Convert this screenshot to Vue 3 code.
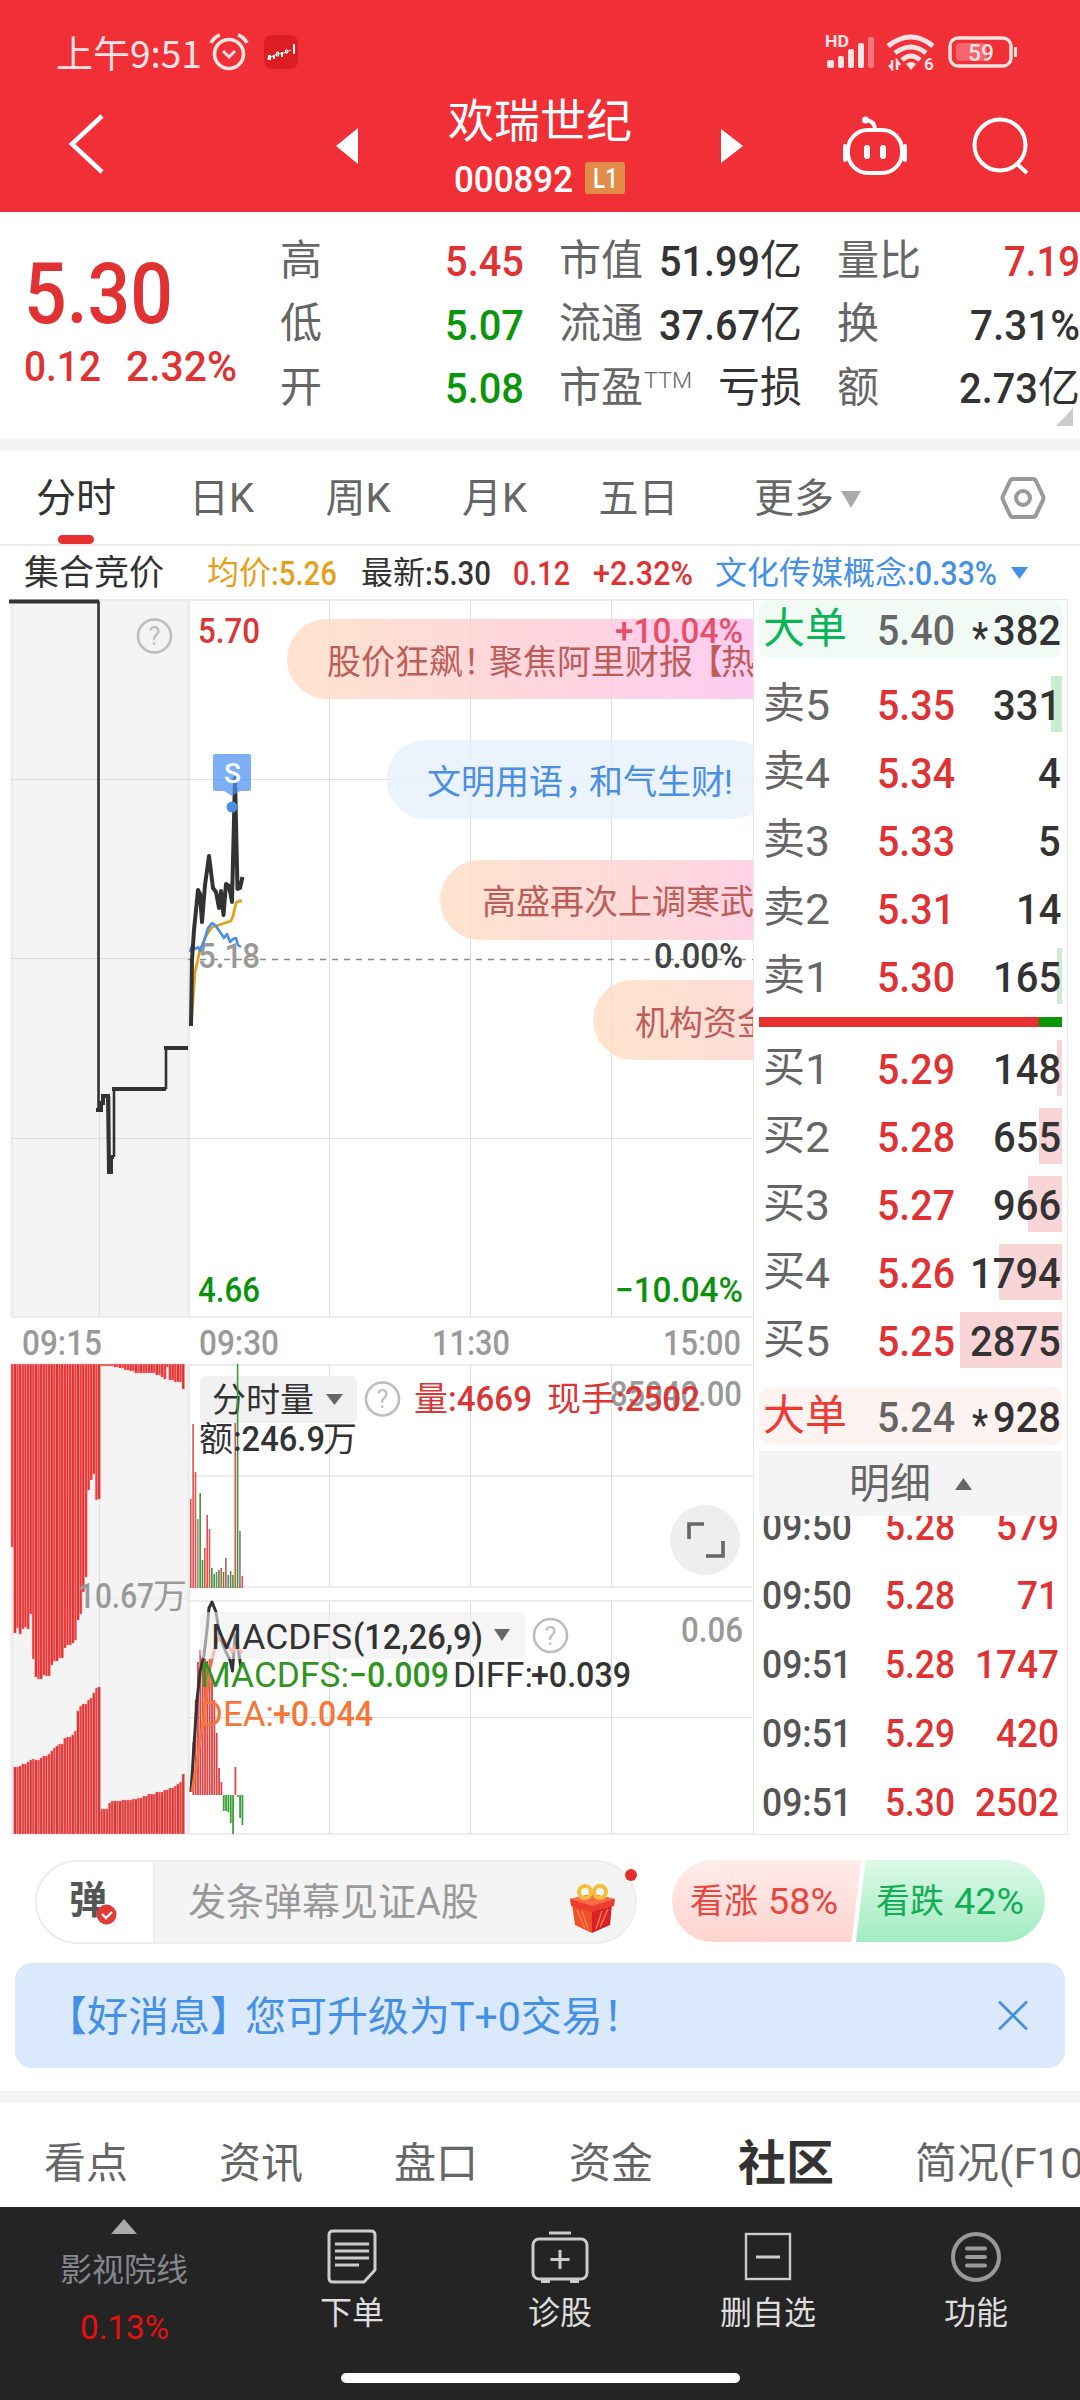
<script setup>
import { h } from 'vue'

// Texto numérico condensado: w = largura, s = altura das maiúsculas
const Fit = (props) =>
  h('svg', { class: 'fit', width: props.w, height: props.s, overflow: 'visible' }, [
    h('text', {
      x: 0,
      y: props.s,
      'font-size': props.s / 0.715,
      textLength: props.w,
      lengthAdjust: 'spacingAndGlyphs',
      fill: 'currentColor'
    }, props.t)
  ])
Fit.props = ['t', 'w', 's']

// Rótulo dentro do gráfico
const Lbl = (props) =>
  h('text', { class: 'lbl', textLength: props.w, lengthAdjust: 'spacingAndGlyphs', 'font-size': 35 }, props.t)
Lbl.props = ['t', 'w']

const quotes = [
  { a: '高', av: '5.45', ac: 'red', b: '市值', bv: '51.99', bw: 101, bu: '亿', c: '量比', cv: '7.19', cw: 76, cc: 'red' },
  { a: '低', av: '5.07', ac: 'green', b: '流通', bv: '37.67', bw: 101, bu: '亿', c: '换', cv: '7.31%', cw: 110 },
  { a: '开', av: '5.08', ac: 'green', b: '市盈', sup: 'TTM', bu: '亏损', c: '额', cv: '2.73', cw: 79, cu: '亿' }
]

const periods = ['分时', '日K', '周K', '月K', '五日']

const sells = [
  { n: '卖', i: 5, p: '5.35', q: '331', bar: 11 },
  { n: '卖', i: 4, p: '5.34', q: '4', bar: 0 },
  { n: '卖', i: 3, p: '5.33', q: '5', bar: 0 },
  { n: '卖', i: 2, p: '5.31', q: '14', bar: 0 },
  { n: '卖', i: 1, p: '5.30', q: '165', bar: 5 }
]
const buys = [
  { n: '买', i: 1, p: '5.29', q: '148', bar: 5 },
  { n: '买', i: 2, p: '5.28', q: '655', bar: 23 },
  { n: '买', i: 3, p: '5.27', q: '966', bar: 34 },
  { n: '买', i: 4, p: '5.26', q: '1794', bar: 63 },
  { n: '买', i: 5, p: '5.25', q: '2875', bar: 102 }
]

const ticks = [
  { t: '09:50', p: '5.28', q: '579' },
  { t: '09:50', p: '5.28', q: '71' },
  { t: '09:51', p: '5.28', q: '1747' },
  { t: '09:51', p: '5.29', q: '420' },
  { t: '09:51', p: '5.30', q: '2502' }
]

// Gera as barras a partir dos degraus [x inicial, y]
const steps = (list) => {
  const out = []
  for (let x = 11; x < 184.5; x += 2.63) {
    let y = list[0][1]
    for (const item of list) {
      if (x + 1 >= item[0]) y = item[1]
    }
    out.push({ x, y })
  }
  return out
}

const hanging = steps([
  [11, 1547], [13.5, 1633], [16, 1628], [19, 1634], [21, 1629], [24, 1627], [26.5, 1629], [29, 1614], [31.5, 1659],
  [34, 1677], [37, 1679], [42, 1675], [45, 1676], [50, 1665], [53, 1661], [57, 1658], [62, 1653], [64, 1648],
  [66, 1645], [70, 1643], [73, 1640], [76, 1620], [79, 1614], [81, 1592], [84, 1577], [86, 1490], [88.5, 1480],
  [91.5, 1474], [94, 1500], [96.5, 1499], [99, 1366], [113, 1367], [118, 1368], [124, 1370], [130, 1371],
  [135, 1373], [148, 1373], [155, 1375], [160, 1377], [163, 1379], [165.5, 1367], [168, 1380], [173, 1382],
  [181, 1389], [184, 1415]
])
const rising = steps([
  [11, 1834], [13.5, 1767], [18, 1766], [21, 1764], [26, 1762], [29, 1760], [32, 1759], [34, 1760], [39, 1758],
  [43, 1756], [47, 1754], [50, 1751], [53, 1748], [56, 1746], [59, 1744], [62, 1738], [67, 1737], [70, 1735],
  [73, 1731], [76, 1711], [79, 1706], [83, 1704], [86, 1700], [89, 1698], [91, 1693], [94, 1688], [97, 1687],
  [99, 1809], [107, 1803], [110, 1801], [121, 1800], [131, 1799], [137, 1798], [142, 1796], [148, 1794],
  [155, 1792], [163, 1790], [168, 1788], [173, 1786], [177, 1784], [179, 1782], [181, 1774], [184, 1765]
])

const R = '#e05050'
const G = '#3a9a35'
const K = '#7b7b7b'
const volumes = [
  [1499, R], [1424, R], [1472, R], [1519, '#b98070'], [1493, G], [1560, G], [1548, R], [1515, R], [1529, R],
  [1568, G], [1574, G], [1572, K], [1570, G], [1568, R], [1572, G], [1558, '#b86060'], [1575, K], [1571, G],
  [1575, G], [1423, R], [1364, G], [1531, K], [1576, R]
]
const macd = [
  1742, 1700, 1662, 1650, 1662, 1658, 1661, 1659, 1675, 1700, 1733, 1768, 1782,
  1811, 1811, 1812, 1823, 1834, 1767, 1797, 1818, 1825
]

const sections = ['看点', '资讯', '盘口', '资金', '社区', '简况(F10)']
</script>

<template>
  <div class="page">
    <header class="header">
      <div class="status">
        <span class="clock">上午9:51</span>
        <svg class="alarm" width="40" height="38" viewBox="0 0 40 38" fill="none" stroke="#ffe3e3" stroke-width="3.6">
          <circle cx="20" cy="21" r="14.5" />
          <path d="M2 10Q5 4 11 2M38 10Q35 4 29 2" />
          <path d="M14 18l6 6l6-6" stroke-width="3" />
        </svg>
        <svg class="app" width="34" height="34" viewBox="0 0 34 34">
          <rect width="34" height="34" rx="8" fill="#dc1d22" />
          <path d="M4 20h3v5h-3zM9 20h2v4h-2zM17 17h2v5h-2zM29 9h2v10h-2z" fill="#fff" />
          <path d="M12.500 17h2v4h-2zM21.500 15h2v3h-2z" fill="none" stroke="#fff" />
          <path d="M3 24L9 21L13 19L20 18L27 15" fill="none" stroke="#fff" />
        </svg>
        <svg class="signal" width="194" height="38" viewBox="0 0 194 38" fill="#ffe3e3">
          <text x="0" y="14" font-size="16" textLength="24" lengthAdjust="spacingAndGlyphs" font-weight="700">HD</text>
          <rect x="2" y="27" width="7" height="8" rx="2" />
          <rect x="13" y="23" width="6" height="12" rx="2" />
          <rect x="23" y="16" width="6" height="19" rx="2" />
          <rect x="33" y="10" width="6" height="25" rx="2" />
          <rect x="43" y="4" width="6" height="31" rx="2" opacity=".4" />
          <g fill="none" stroke="#ffe3e3" stroke-width="5">
            <path d="M63 13Q86 -5 108 13" />
            <path d="M70 20Q86 8 101 20" />
            <path d="M77 27Q86 19 95 27" />
          </g>
          <path d="M81 31Q86 27 91 31L86 37z" />
          <path d="M67 27v9l-3-4M72 37v-9l3 4" fill="none" stroke="#ffe3e3" stroke-width="2.500" />
          <text x="99" y="37" font-size="17" font-weight="700">6</text>
          <rect x="125" y="5" width="61" height="28" rx="8" fill="none" stroke="#ffe3e3" stroke-width="3.400" />
          <rect x="131" y="10" width="31" height="18" rx="4" opacity=".3" />
          <rect x="189" y="14" width="3" height="10" rx="1" />
          <text x="143" y="28" font-size="24" textLength="26" lengthAdjust="spacingAndGlyphs" font-weight="500">59</text>
        </svg>
      </div>
      <div class="titlebar">
        <svg class="back" width="38" height="62" viewBox="0 0 38 62" fill="none" stroke="#fff" stroke-width="4.500">
          <path d="M34 3L4 31L34 59" />
        </svg>
        <svg class="prev" width="22" height="36" viewBox="0 0 22 36"><path d="M22 0v36L0 18z" fill="#fff" /></svg>
        <div class="stock">
          <h1>欢瑞世纪</h1>
          <div class="code">
            <Fit t="000892" :w="119" :s="27" />
            <span class="level"><Fit t="L1" :w="25" :s="20" /></span>
          </div>
        </div>
        <svg class="next" width="22" height="34" viewBox="0 0 22 34"><path d="M0 0v34L22 17z" fill="#fff" /></svg>
        <svg class="robot" width="66" height="62" viewBox="0 0 66 62" fill="none" stroke="#fff" stroke-width="4">
          <path d="M33 15Q33 6 24 5" />
          <circle cx="23.500" cy="5" r="3.500" fill="#fff" stroke="none" />
          <rect x="6" y="15" width="54" height="43" rx="20" />
          <path d="M3 31v14M63 31v14" stroke-linecap="round" />
          <path d="M25 33v8M41 33v8" stroke-width="6" stroke-linecap="round" />
        </svg>
        <svg class="search" width="58" height="58" viewBox="0 0 58 58" fill="none" stroke="#fff" stroke-width="4">
          <circle cx="28" cy="28" r="25.500" />
          <path d="M45 47l10 9" />
        </svg>
      </div>
    </header>

    <section class="quote">
      <div class="price red">
        <Fit t="5.30" :w="149" :s="61" />
        <div class="change">
          <Fit t="0.12" :w="77" :s="31" />
          <Fit t="2.32%" :w="111" :s="31" />
        </div>
      </div>
      <div class="facts">
        <div v-for="q in quotes" :key="q.a" class="fact">
          <span class="col1"><i>{{ q.a }}</i><Fit :t="q.av" :w="79" :s="31" :class="q.ac" /></span>
          <span class="col2">
            <i>{{ q.b }}</i><sup v-if="q.sup"><Fit :t="q.sup" :w="48" :s="16" /></sup>
            <b><Fit v-if="q.bv" :t="q.bv" :w="q.bw" :s="31" />{{ q.bu }}</b>
          </span>
          <span class="col3"><i>{{ q.c }}</i><b :class="q.cc"><Fit :t="q.cv" :w="q.cw" :s="31" />{{ q.cu }}</b></span>
        </div>
      </div>
      <svg class="corner" width="17" height="18" viewBox="0 0 17 18"><path d="M17 0v18H0z" fill="#ccc" /></svg>
    </section>

    <nav class="periods">
      <span v-for="(p, i) in periods" :key="p" :class="{ active: i === 0 }">{{ p }}</span>
      <span class="more">更多<svg width="20" height="17" viewBox="0 0 20 17"><path d="M0 0h20L10 17z" fill="#aaa" /></svg></span>
      <svg class="gear" width="46" height="44" viewBox="0 0 46 44" fill="none" stroke="#999" stroke-width="4">
        <path d="M13 3H33Q35 3 36 5L43 20Q44 22 43 24L36 39Q35 41 33 41H13Q11 41 10 39L3 24Q2 22 3 20L10 5Q11 3 13 3z" />
        <circle cx="23" cy="22" r="7" />
      </svg>
    </nav>

    <div class="info">
      <span class="auction">集合竞价</span>
      <span class="avg">均价<Fit t=":5.26" :w="66" :s="24" /></span>
      <span class="last">最新<Fit t=":5.30" :w="66" :s="24" /></span>
      <Fit class="red diff" t="0.12" :w="57" :s="24" />
      <Fit class="red rate" t="+2.32%" :w="100" :s="24" />
      <span class="concept">文化传媒概念<Fit t=":0.33%" :w="90" :s="24" /></span>
      <svg width="17" height="12" viewBox="0 0 17 12"><path d="M0 0h17L8.500 12z" fill="#4490e6" /></svg>
    </div>

    <main class="market">
      <svg class="chart" width="753" height="1236" viewBox="0 599 753 1236">
        <defs>
          <linearGradient id="warm" gradientUnits="userSpaceOnUse" x1="287" x2="753" y1="0" y2="0">
            <stop offset="0" stop-color="#ffdfc6" />
            <stop offset=".5" stop-color="#ffd0d6" />
            <stop offset="1" stop-color="#ffc4f0" />
          </linearGradient>
          <linearGradient id="warm2" gradientUnits="userSpaceOnUse" x1="440" x2="860" y1="0" y2="0">
            <stop offset="0" stop-color="#ffdfc6" />
            <stop offset=".6" stop-color="#ffd0d9" />
            <stop offset="1" stop-color="#ffc4f0" />
          </linearGradient>
          <linearGradient id="warm3" gradientUnits="userSpaceOnUse" x1="593" x2="850" y1="0" y2="0">
            <stop offset="0" stop-color="#ffdfc6" />
            <stop offset="1" stop-color="#ffd2d5" />
          </linearGradient>
        </defs>

        <!-- fundo do leilão e grade -->
        <rect x="11" y="599" width="178" height="718" fill="#f4f4f4" />
        <rect x="11" y="1364" width="178" height="470" fill="#f4f4f4" />
        <g stroke="#ececec" stroke-width="2">
          <path d="M11 600H753M11 1317H753M189 1365H753M189 1476H753M189 1587H753M189 1601H753M189 1834H753M12 1598.500H188" />
          <path d="M12 600V1317M12 1364V1834M188.500 600V1317M188.500 1364V1834" stroke-width="3" />
        </g>
        <g stroke="#dedede" stroke-width="1">
          <path d="M11 779.500H753M11 958.500H188M11 1138.500H753M188 1717.500H753" />
          <path d="M99.500 600V1317M99.500 1364V1834" />
          <path v-for="x in [329.5, 470.5, 611.5]" :key="x" :d="`M${x} 600V1317M${x} 1364V1587M${x} 1601V1834`" />
        </g>
        <path d="M188 959.500H753" stroke="#8c8c8c" stroke-width="1.500" stroke-dasharray="6 6" />

        <!-- linha do leilão -->
        <g fill="none" stroke="#333">
          <path d="M98.500 601V1109M109 1096V1172M114 1157V1089M166 1089V1048" stroke-width="2.600" />
          <path d="M9 601.500H99M96 1110H101V1103H103V1096H108L109 1172H111V1157H114M112 1089H166M164 1048H188" stroke-width="4" />
        </g>
        <g fill="none" stroke="#bdbdbd" stroke-width="2.600">
          <circle cx="154.500" cy="636" r="16.500" />
          <circle cx="382.500" cy="1399" r="16.500" />
          <circle cx="550.500" cy="1635.500" r="16.500" />
        </g>
        <g fill="#bdbdbd" font-size="25" text-anchor="middle">
          <text x="154.500" y="645">?</text>
          <text x="382.500" y="1408">?</text>
          <text x="550.500" y="1644.500">?</text>
        </g>

        <!-- preço, média e conceito -->
        <Lbl t="5.18" x="198" y="968" :w="62" fill="#999" />
        <g fill="none" stroke-linejoin="round">
          <path d="M191 1026L195 972L200 950L206 936L212 927L222 924L231 921L233 916L236 903L239 901H242" stroke="#e3a01b" stroke-width="2.800" />
          <path d="M190 952L192 946L195 949L198 947L200 951L204 941L208 928L212 923L216 926L220 932L224 938L227 934L230 942L233 939L236 938L238 945L241 947" stroke="#4a8fe2" stroke-width="2.600" />
          <path d="M191 1026L192 960L194 930L198 890L200 894L202 922L205 885L209 856L213 888L216 892L219 908L221 891L223.500 915L226 884L229 886L232 902L235 778L237.500 889L240 888L242.500 877" stroke="#333" stroke-width="4" />
        </g>
        <path d="M215 754H249Q251 754 251 756V789Q251 791 249 791H240L232 796L224 791H215Q213 791 213 789V756Q213 754 215 754z" fill="#4a90ee" opacity=".72" />
        <circle cx="232" cy="807" r="5.500" fill="#4a8fe2" />
        <text class="lbl" x="224" y="783" font-size="28" fill="#fff">S</text>

        <Lbl t="5.70" x="198" y="643" :w="62" fill="#d93636" />
        <Lbl t="4.66" x="198" y="1302" :w="62" fill="#0a920a" />
        <Lbl t="0.00%" x="654" y="968" :w="89" fill="#444" />
        <Lbl t="−10.04%" x="615" y="1302" :w="128" fill="#0a920a" />
        <g fill="#999">
          <Lbl t="09:15" x="22" y="1355" :w="80" />
          <Lbl t="09:30" x="199" y="1355" :w="80" />
          <Lbl t="11:30" x="432" y="1355" :w="78" />
          <Lbl t="15:00" x="663" y="1355" :w="78" />
        </g>

        <!-- comentários flutuantes -->
        <g opacity=".85">
          <path d="M753 619H327A40 40 0 0 0 327 699H753z" fill="url(#warm)" />
          <path d="M726 740H426A39.500 39.500 0 0 0 426 819H726Q742 819 753 814V745Q742 740 726 740z" fill="#e8f1fd" />
          <path d="M753 860H480A40 40 0 0 0 480 940H753z" fill="url(#warm2)" />
          <path d="M753 980H633A40 40 0 0 0 633 1060H753z" fill="url(#warm3)" />
        </g>
        <Lbl t="+10.04%" x="615" y="643" :w="128" fill="#e8506a" />
        <g font-size="34" fill="#bd5d59">
          <text x="327" y="674">股价狂飙</text>
          <text x="463" y="674">！</text>
          <text x="489" y="674">聚焦阿里财报</text>
          <text x="689" y="674">【</text>
          <text x="721" y="674">热</text>
          <text x="482" y="914">高盛再次上调寒武</text>
          <text x="635" y="1035">机构资金</text>
          <g fill="#4a8fe2">
            <text x="427" y="794">文明用语</text>
            <text x="565" y="794">，</text>
            <text x="589" y="794">和气生财</text>
            <text x="724" y="794">!</text>
          </g>
        </g>

        <!-- volume do leilão -->
        <g stroke="#f7a5a5" stroke-width=".4">
          <rect v-for="(b, i) in hanging" :key="'h' + i" :x="b.x" y="1364" width="2.63" :height="b.y - 1364" :fill="i % 2 ? '#dc3434' : '#ee3a3a'" />
          <rect v-for="(b, i) in rising" :key="'r' + i" :x="b.x" :y="b.y" width="2.63" :height="1834 - b.y" :fill="i % 2 ? '#cf3a3a' : '#ec4040'" />
        </g>
        <Lbl t="10.67" x="78" y="1608" :w="76" fill="#999" />
        <text x="153" y="1608" font-size="34" fill="#999">万</text>

        <!-- volume por minuto -->
        <Lbl t="85940.00" x="610" y="1406" :w="132" fill="#999" />
        <rect x="200" y="1376" width="157" height="47" rx="6" fill="#f1f1f1" />
        <text x="212" y="1412" font-size="34" fill="#333">分时量</text>
        <path d="M326 1394H343L334.500 1405z" fill="#666" />
        <rect v-for="(v, i) in volumes" :key="'v' + i" :x="190 + i * 2.34" :y="v[0]" width="1.6" :height="1588 - v[0]" :fill="v[1]" />
        <g fill="#d93636">
          <text x="414" y="1411" font-size="34">量</text>
          <Lbl t=":4669" x="448" y="1411" :w="84" />
          <text x="547" y="1411" font-size="34">现手</text>
          <Lbl t=":2502" x="616" y="1411" :w="84" />
        </g>
        <g fill="#333">
          <text x="199" y="1451" font-size="34">额</text>
          <Lbl t=":246.9" x="233" y="1451" :w="92" />
          <text x="323" y="1451" font-size="34">万</text>
        </g>
        <circle cx="705" cy="1540" r="35" fill="#eee" />
        <path d="M704 1524H689V1539M723 1541V1556H706" fill="none" stroke="#666" stroke-width="3.600" />

        <!-- MACD -->
        <rect
          v-for="(m, i) in macd"
          :key="'m' + i"
          :x="192.4 + i * 2.34"
          :y="Math.min(m, 1795)"
          width="1.8"
          :height="Math.abs(m - 1795)"
          :fill="m < 1795 ? '#dc4545' : '#3aa035'"
        />
        <g fill="none" stroke-linejoin="round" stroke-width="3">
          <path d="M191 1792L194 1745L197 1700L200 1672L204 1655L207 1630L209 1608L212 1602L216 1612L220 1638L226 1652L230 1660L232.500 1671L235 1635L237 1640L241 1668" stroke="#333" />
          <path d="M192 1792L198 1755L204 1715L210 1668L216 1643L220 1636L226 1642L232 1652L237 1646L242 1653" stroke="#fa7040" />
        </g>
        <rect x="200" y="1612" width="325" height="47" rx="6" fill="#efefef" opacity=".6" />
        <Lbl class="thin" t="MACDFS" x="211" y="1649" :w="141" fill="#333" />
        <Lbl t="(12,26,9)" x="353" y="1649" :w="130" fill="#333" />
        <path d="M494 1629H510L502 1641z" fill="#666" />
        <Lbl t="0.06" x="681" y="1642" :w="62" fill="#999" />
        <g fill="#2f951f">
          <Lbl class="thin" t="MACDFS:" x="200" y="1687" :w="149" />
          <Lbl t="−0.009" x="349" y="1687" :w="100" />
        </g>
        <g fill="#333">
          <Lbl class="thin" t="DIFF:" x="453" y="1687" :w="80" />
          <Lbl t="+0.039" x="531" y="1687" :w="100" />
        </g>
        <g fill="#f67639">
          <Lbl class="thin" t="DEA:" x="200" y="1726" :w="74" />
          <Lbl t="+0.044" x="273" y="1726" :w="100" />
        </g>
      </svg>

      <aside class="book">
        <div class="big big-sell">
          <span>大单</span><Fit t="5.40" :w="78" :s="31" />
          <b><Fit class="star" t="*" :w="16" :s="31" /><Fit t="382" :w="68" :s="31" /></b>
        </div>
        <div class="levels sell">
          <div v-for="r in sells" :key="r.i" class="level-row">
            <em :style="{ width: r.bar + 'px' }"></em>
            <span>{{ r.n }}<Fit :t="r.i" :w="25" :s="31" /></span>
            <Fit class="red" :t="r.p" :w="78" :s="31" />
            <b><Fit :t="r.q" :w="r.q.length * 22.7" :s="31" /></b>
          </div>
        </div>
        <div class="ratio"><i></i></div>
        <div class="levels buy">
          <div v-for="r in buys" :key="r.i" class="level-row">
            <em :style="{ width: r.bar + 'px' }"></em>
            <span>{{ r.n }}<Fit :t="r.i" :w="25" :s="31" /></span>
            <Fit class="red" :t="r.p" :w="78" :s="31" />
            <b><Fit :t="r.q" :w="r.q.length * 22.7" :s="31" /></b>
          </div>
        </div>
        <div class="big big-buy">
          <span>大单</span><Fit t="5.24" :w="78" :s="31" />
          <b><Fit class="star" t="*" :w="16" :s="31" /><Fit t="928" :w="68" :s="31" /></b>
        </div>
        <div class="detail">
          明细<svg width="17" height="12" viewBox="0 0 17 12"><path d="M8.500 0L17 12H0z" fill="#666" /></svg>
        </div>
        <div class="ticks">
          <div v-for="(t, i) in ticks" :key="i" class="tick">
            <Fit :t="t.t" :w="90" :s="28" />
            <Fit class="red" :t="t.p" :w="70" :s="28" />
            <b class="red"><Fit :t="t.q" :w="t.q.length * 21" :s="28" /></b>
          </div>
        </div>
      </aside>
    </main>

    <div class="danmaku">
      <div class="compose">
        <div class="toggle">
          弹
          <svg width="21" height="21" viewBox="0 0 21 21">
            <circle cx="10.500" cy="10.500" r="10" fill="#e23b36" />
            <path d="M6 10l4 4l6-6" fill="none" stroke="#fff" stroke-width="2.400" />
          </svg>
        </div>
        <div class="placeholder">发条弹幕见证A股</div>
        <svg class="gift" width="48" height="50" viewBox="0 0 48 50">
          <path d="M3 20L23 26L23 49L6 41z" fill="#f0502c" />
          <path d="M23 26L43 20L41 41L23 49z" fill="#d81f25" />
          <path d="M1 15L23 10L46 15L45 22L23 28L2 22z" fill="#ea3d2e" />
          <path d="M1 15L23 10L46 15L23 22z" fill="#fb6a45" />
          <path d="M8 26l8 18M13 27l6 18M33 27l-6 18M39 25l-8 18" stroke="#ff7a48" stroke-width="1.500" />
          <g fill="none" stroke="#f5bf3d" stroke-width="4">
            <ellipse cx="16" cy="8" rx="6" ry="6" />
            <ellipse cx="31" cy="8" rx="6" ry="6" />
          </g>
        </svg>
        <i class="dot"></i>
      </div>
      <div class="vote">
        <div class="bull">看涨<Fit t="58%" :w="70" :s="26" /></div>
        <div class="bear">看跌<Fit t="42%" :w="70" :s="26" /></div>
      </div>
    </div>

    <div class="banner">
      <span class="msg">【好消息<i class="rb">】</i>您可升级为T+0交易！</span>
      <svg width="30" height="29" viewBox="0 0 30 29" stroke="#4a90e2" stroke-width="2.800"><path d="M1 0.500L29 28.500M29 0.500L1 28.500" /></svg>
    </div>

    <nav class="sections">
      <span v-for="s in sections" :key="s" :class="{ on: s === '社区' }">{{ s }}</span>
    </nav>

    <footer class="footer">
      <div class="index">
        <svg width="26" height="15" viewBox="0 0 26 15"><path d="M13 0L26 15H0z" fill="#aaa" /></svg>
        <span>影视院线</span>
        <Fit t="0.13%" :w="89" :s="24" />
      </div>
      <div class="action">
        <svg width="56" height="56" viewBox="0 0 56 56" fill="none" stroke="#ccc" stroke-width="3">
          <path d="M9 2H47Q51 2 51 6V41L40 53H9Q5 53 5 49V6Q5 2 9 2z" />
          <path d="M11 15H45M11 22H45M11 29H45M11 36H35" />
        </svg>
        <span>下单</span>
      </div>
      <div class="action">
        <svg width="60" height="56" viewBox="0 0 60 56" fill="none" stroke="#ccc" stroke-width="3">
          <path d="M19 4H41" />
          <rect x="3" y="10" width="54" height="40" rx="6" />
          <path d="M30 21V40M20.500 30.500H39.500" />
          <path d="M11 52H20M40 52H49" stroke-width="4" />
        </svg>
        <span>诊股</span>
      </div>
      <div class="action">
        <svg width="56" height="56" viewBox="0 0 56 56" fill="none" stroke="#ccc" stroke-width="2.400">
          <rect x="6" y="5" width="44" height="45" />
          <path d="M16 28H40" stroke-width="3" />
        </svg>
        <span>删自选</span>
      </div>
      <div class="action">
        <svg width="56" height="56" viewBox="0 0 56 56" fill="none" stroke="#999" stroke-width="4">
          <circle cx="28" cy="28" r="23" />
          <path d="M19 19.500H37M19 28H37M19 36.500H37" stroke-linecap="round" />
        </svg>
        <span>功能</span>
      </div>
    </footer>
    <div class="home"><i></i></div>
  </div>
</template>

<style>
body {
  background: #fff;
  overflow: hidden;
}

.fit text,
.lbl {
  font-family: Roboto, sans-serif;
}
</style>

<style scoped>
.page {
  width: 1080px;
  height: 2400px;
  overflow: hidden;
  background: #fff;
  color: #333;
  font-family: Roboto, "Noto Sans CJK SC", sans-serif;
  line-height: 1;
}

svg {
  display: block;
  flex: none;
}

.fit,
.lbl {
  font-weight: 500;
}

.lbl.thin {
  font-weight: 400;
}

.fit {
  overflow: visible;
}

i,
em {
  font-style: normal;
}

b {
  font-weight: 400;
}

.red {
  color: #e03232;
}

.green {
  color: #0a960a;
}

/* Cabeçalho */
.header {
  height: 212px;
  background: #f12f37;
  color: #fff;
}

.status {
  display: flex;
  align-items: center;
  height: 38px;
  padding: 33px 61px 0 56px;
}

.clock {
  width: 153px;
  font-family: "Noto Sans CJK SC", sans-serif;
  font-size: 37px;
  color: #ffe3e3;
  white-space: nowrap;
}

.app {
  margin-left: 15px;
}

.signal {
  margin-left: auto;
}

.titlebar {
  display: flex;
  align-items: center;
  height: 120px;
  padding: 15px 50px 0 68px;
}

.back {
  margin-top: -4px;
}

.prev {
  margin-left: 230px;
}

.stock {
  width: 182px;
  margin-left: 90px;
}

.stock h1 {
  margin: 0;
  font-size: 46px;
  font-weight: 400;
  white-space: nowrap;
}

.code {
  display: flex;
  align-items: center;
  height: 32px;
  margin-top: 18px;
  padding-left: 6px;
}

.level {
  display: flex;
  align-items: center;
  justify-content: center;
  width: 40px;
  height: 32px;
  margin-left: 12px;
  border-radius: 3px;
  background: #e18c48;
}

.next {
  margin-left: 91px;
}

.robot {
  margin-left: 99px;
}

.search {
  margin-left: auto;
}

/* Cotação */
.quote {
  position: relative;
  display: flex;
  height: 227px;
  border-bottom: 12px solid #f4f4f4;
}

.price {
  width: 256px;
  padding: 50px 0 0 24px;
  box-sizing: content-box;
}

.change {
  display: flex;
  gap: 25px;
  margin-top: 27px;
}

.facts {
  flex: 1;
  padding-top: 17px;
  font-size: 42px;
}

.fact {
  display: flex;
  height: 63.5px;
}

.fact > span {
  display: flex;
  align-items: center;
}

.fact i,
sup {
  color: #666;
}

sup {
  align-self: flex-start;
  margin: 16px 0 0 1px;
}

sup .fit {
  font-weight: 300;
}

.fact b {
  display: flex;
  align-items: center;
  margin-left: auto;
}

.col1 {
  width: 244px;
}

.col1 .fit {
  margin-left: auto;
}

.col2 {
  width: 243px;
  margin-left: 35px;
}

.col3 {
  width: 243px;
  margin-left: 35px;
}

.corner {
  position: absolute;
  right: 7px;
  bottom: 13px;
}

/* Períodos */
.periods {
  display: flex;
  align-items: center;
  height: 93px;
  padding-left: 36px;
  border-bottom: 2px solid #ececec;
  font-size: 40px;
  color: #666;
}

.periods span {
  position: relative;
  width: 136.5px;
  padding-top: 3px;
}

.periods span:first-child {
  width: 153px;
}

.periods .active {
  color: #333;
}

.periods .active::after {
  content: "";
  position: absolute;
  left: 22px;
  bottom: -25px;
  width: 36px;
  height: 9px;
  border-radius: 5px;
  background: #e93030;
}

.periods .more {
  display: flex;
  align-items: center;
  gap: 7px;
  margin-left: 19px;
}

.gear {
  margin-left: auto;
  margin-right: 34px;
}

/* Resumo */
.info {
  display: flex;
  align-items: center;
  height: 53px;
  padding: 1px 52px 0 24px;
  box-sizing: border-box;
  font-size: 32px;
}

.info span {
  display: flex;
  align-items: center;
}

.auction {
  width: 183px;
  font-size: 35px;
}

.avg {
  width: 154px;
  color: #e3a01b;
}

.last {
  width: 151px;
}

.diff {
  margin-left: 1px;
  margin-right: 23px;
}

.concept {
  margin-left: 22px;
  margin-right: auto;
  color: #4490e6;
}

/* Gráfico e livro de ofertas */
.market {
  display: flex;
  height: 1236px;
}

.book {
  display: flex;
  flex-direction: column;
  box-sizing: border-box;
  width: 315px;
  height: 1236px;
  padding: 0 5px;
  border: 1px solid #e8e8e8;
  font-size: 42px;
}

.big {
  display: flex;
  align-items: center;
  height: 58px;
  padding: 0 1px 0 4px;
  border-radius: 10px;
}

.big span {
  width: 114px;
}

.big .fit {
  color: #666;
}

.big b,
.level-row b,
.tick b {
  display: flex;
  margin-left: auto;
}

.big b .fit {
  color: #333;
}

.big .star {
  margin: 7px 5px -7px 0;
}

.big-sell {
  background: #f2faf6;
  color: #0bb457;
}

.big-buy {
  margin-top: 18px;
  background: #fff3f2;
  color: #ee3a32;
}

.levels {
  box-sizing: border-box;
}

.sell {
  height: 359px;
  padding-top: 12px;
}

.buy {
  height: 342px;
  padding-top: 7px;
}

.level-row {
  position: relative;
  display: flex;
  align-items: center;
  height: 68px;
  padding: 0 1px 0 4px;
}

.level-row em {
  position: absolute;
  right: 0;
  top: 6px;
  height: 56px;
  background: #fad5d7;
}

.sell .level-row em {
  background: #cdebcf;
}

.level-row .fit,
.level-row span {
  position: relative;
}

.level-row span {
  display: flex;
  align-items: center;
  width: 114px;
  color: #666;
}

.level-row span .fit {
  font-weight: 400;
}

.ratio {
  display: flex;
  justify-content: flex-end;
  height: 10px;
  background: #e93030;
}

.ratio i {
  width: 23px;
  background: #069606;
}

.detail {
  display: flex;
  align-items: center;
  justify-content: center;
  gap: 24px;
  height: 65px;
  margin-top: 6px;
  padding-top: 1px;
  box-sizing: border-box;
  background: #f4f4f4;
  font-size: 41px;
  color: #666;
}

.ticks {
  display: flex;
  flex-direction: column;
  justify-content: flex-end;
  flex: 1;
  min-height: 0;
  overflow: hidden;
}

.tick {
  display: flex;
  flex: none;
  align-items: center;
  height: 69px;
  padding: 0 3px 0 3px;
  color: #555;
}

.tick > .fit + .fit {
  margin-left: 33px;
}

.tick:last-child {
  margin-bottom: -2px;
}

/* Comentários */
.danmaku {
  display: flex;
  justify-content: space-between;
  height: 82px;
  padding: 25px 35px 0;
}

.compose {
  position: relative;
  display: flex;
  align-items: center;
  box-sizing: border-box;
  width: 602px;
  height: 84px;
  border: 2px solid #ededed;
  border-radius: 42px;
  background: linear-gradient(90deg, #fff 116px, #ededed 116px, #ededed 118px, #f4f4f4 118px);
}

.toggle {
  position: relative;
  width: 82px;
  margin-top: -5px;
  padding-left: 32px;
  font-size: 38px;
  font-weight: 700;
  color: #555;
}

.toggle svg {
  position: absolute;
  left: 59px;
  top: 23px;
}

.placeholder {
  padding-left: 37px;
  font-size: 38px;
  color: #999;
}

.gift {
  margin-left: auto;
  margin-right: 18px;
  margin-top: 13px;
}

.dot {
  position: absolute;
  right: -2px;
  top: 7px;
  width: 12px;
  height: 12px;
  border-radius: 50%;
  background: #e23030;
}

.vote {
  display: flex;
  width: 373px;
  height: 82px;
  border-radius: 41px;
  overflow: hidden;
  font-size: 34px;
}

.vote .fit {
  font-weight: 400;
}

.bull,
.bear {
  display: flex;
  align-items: center;
  gap: 10px;
  box-sizing: border-box;
}

.bull {
  width: 189px;
  padding-left: 18px;
  background: linear-gradient(#ffecea, #ffd4cf);
  clip-path: polygon(0 0, 100% 0, 95% 100%, 0 100%);
  color: #e8463f;
}

.bear {
  width: 189px;
  margin-left: -5px;
  padding-left: 20px;
  background: linear-gradient(#dcf9e8, #a2ecc0);
  clip-path: polygon(5% 0, 100% 0, 100% 100%, 0 100%);
  color: #12ae55;
}

.banner {
  display: flex;
  align-items: center;
  justify-content: space-between;
  height: 105px;
  margin: 21px 15px 23px;
  padding: 0 37px 0 31px;
  border-radius: 17px;
  background: #dae9fc;
  font-size: 41px;
  color: #4490e6;
}

.msg {
  padding-top: 4px;
}

.rb {
  margin-right: -6px;
}

/* Abas inferiores */
.sections {
  display: flex;
  align-items: center;
  height: 104px;
  padding-left: 44px;
  border-top: 12px solid #f4f4f4;
  font-size: 42px;
  color: #666;
  white-space: nowrap;
}

.sections span {
  flex: none;
  width: 175px;
  padding-top: 17px;
}

.sections .on {
  width: 177px;
  margin-left: -6px;
  font-size: 48px;
  font-weight: 700;
  color: #333;
}

.footer {
  display: flex;
  height: 166px;
  background: #242424;
  font-size: 32px;
  color: #ddd;
}

.index {
  display: flex;
  flex-direction: column;
  align-items: center;
  width: 248px;
  padding-top: 12px;
  color: #e81010;
}

.index span {
  margin: 20px 0 29px;
  color: #85878e;
}

.index .fit {
  font-weight: 400;
}

.action {
  display: flex;
  flex-direction: column;
  align-items: center;
  width: 208px;
  padding-top: 22px;
}

.action span {
  margin-top: 12px;
}

.home {
  display: flex;
  justify-content: center;
  height: 27px;
  background: #242424;
}

.home i {
  width: 399px;
  height: 10px;
  border-radius: 5px;
  background: #fff;
}
</style>
